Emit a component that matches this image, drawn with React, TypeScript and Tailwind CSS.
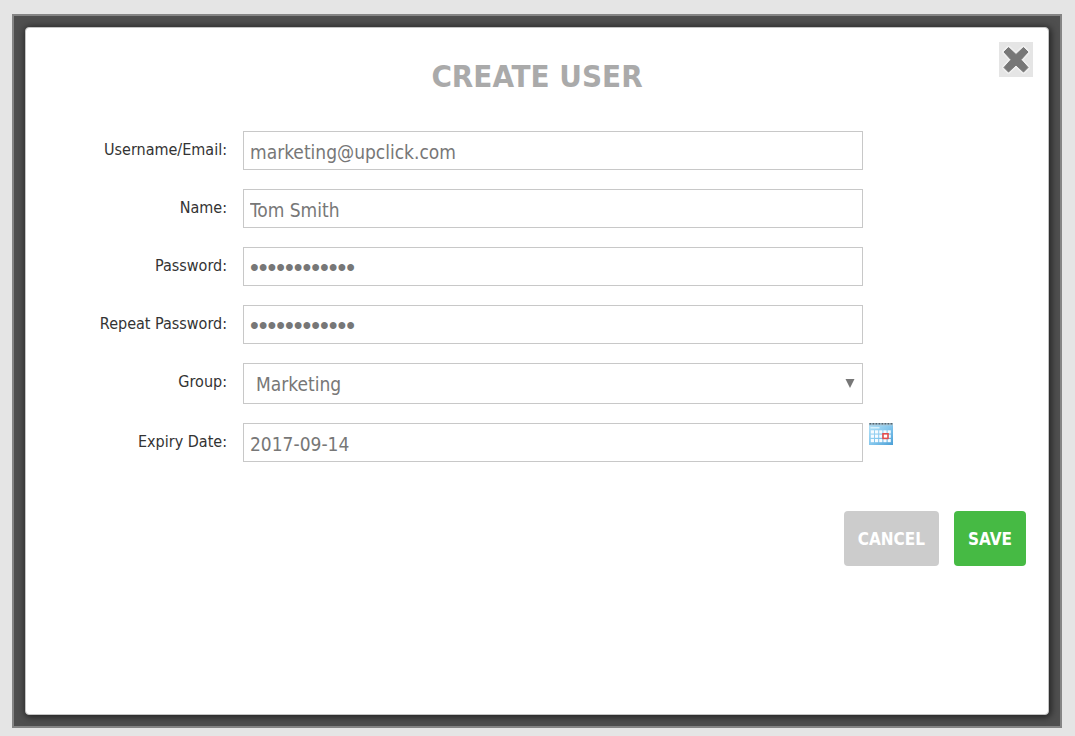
import { useState } from "react";
import type { ReactNode } from "react";

const boxClass =
  "h-[39px] w-full min-w-0 rounded-none border border-[#c8c8c8] bg-white px-1.5 text-[#777777] outline-none focus:border-[#888888]";
const fieldClass = `${boxClass} pt-0.5 text-[19px]`;
const passwordClass = `${boxClass} pt-0.5 text-[25px] font-['Liberation_Sans',sans-serif]`;

function Row({ id, label, children, after }: { id: string; label: string; children: ReactNode; after?: ReactNode }) {
  return (
    <div className="flex items-start">
      <label htmlFor={id} className="mr-4 w-[201px] shrink-0 pt-2 text-right text-[16px] leading-[22px] text-[#333333]">
        {label}
      </label>
      <div className="min-w-0 max-w-[620px] flex-1">{children}</div>
      <div className="ml-1.5 w-6 shrink-0">{after}</div>
    </div>
  );
}

function CloseIcon() {
  const cross =
    "M9.500 5.500 17 12.500 24.500 5.500 29 10 22 17.700 29 25.500 24.500 30 17 23 9.500 30 5 25.500 12 17.700 5 10Z";
  return (
    <svg viewBox="0 0 34 35" className="h-[35px] w-[34px]" aria-hidden="true">
      <path d={cross} fill="#efefef" stroke="#efefef" strokeWidth="4" strokeLinejoin="round" />
      <path d={cross} fill="#777777" stroke="#777777" strokeWidth="1" strokeLinejoin="round" />
    </svg>
  );
}

function CalendarIcon() {
  const columns = [1.8, 6, 10.2, 14.4, 18.6];
  const rows = [7.3, 11.6, 16];
  return (
    <svg viewBox="0 0 24 22" className="h-[22px] w-6" aria-hidden="true">
      <defs>
        <linearGradient id="sheet" x1="0" y1="0" x2="1" y2="1">
          <stop offset="0" stopColor="#b4e2f8" />
          <stop offset="0.5" stopColor="#86c8ee" />
          <stop offset="1" stopColor="#4a9fd6" />
        </linearGradient>
      </defs>
      <rect y="1" width="24" height="21" fill="url(#sheet)" />
      <rect width="24" height="2.500" fill="#a9c8da" />
      {[0.5, 3.5, 6.5, 9.5, 12.5, 15.5, 18.5, 21.5].map((x) => (
        <rect key={x} x={x} width="1.800" height="1.500" fill="#56646d" />
      ))}
      <rect x="1.500" y="4" width="9" height="1.500" fill="#d9f1fc" />
      {rows.map((y) => columns.map((x) => <rect key={`${x}-${y}`} x={x} y={y} width="3.200" height="3.200" fill="#f5fbff" />))}
      <rect x="14" y="10.800" width="5" height="4.600" fill="#fff" stroke="#e34c4c" strokeWidth="1.600" />
    </svg>
  );
}

export default function App() {
  const [username, setUsername] = useState("marketing@upclick.com");
  const [name, setName] = useState("Tom Smith");
  const [password, setPassword] = useState("tomsmith2017");
  const [repeat, setRepeat] = useState("tomsmith2017");
  const [group, setGroup] = useState("Marketing");
  const [expiry, setExpiry] = useState("2017-09-14");

  return (
    <div className="flex min-h-screen flex-col bg-[#e5e5e5] pt-3.5 pr-[13px] pb-2 pl-3 font-['DejaVu_Sans_Condensed','DejaVu_Sans',sans-serif]">
      <div className="flex flex-1 flex-col border-2 border-[#858585] bg-[#4f4f4f] p-[11px]">
        <main
          role="dialog"
          aria-labelledby="title"
          className="relative flex-1 rounded-[4px] border border-[#c4c4c4] bg-white shadow-[1px_1px_7px_1px_rgba(0,0,0,0.6)]"
        >
          <button type="button" aria-label="Close" className="absolute top-3.5 right-[15px] bg-[#e5e5e5]">
            <CloseIcon />
          </button>
          <h1 id="title" className="pt-7 text-center text-[31px] leading-10 font-bold text-[#aaaaaa]">
            CREATE USER
          </h1>
          <form onSubmit={(e) => e.preventDefault()}>
            <div className="flex flex-col gap-[19px] pt-[35px]">
              <Row id="username" label="Username/Email:">
                <input id="username" className={fieldClass} value={username} onChange={(e) => setUsername(e.target.value)} />
              </Row>
              <Row id="name" label="Name:">
                <input id="name" className={fieldClass} value={name} onChange={(e) => setName(e.target.value)} />
              </Row>
              <Row id="password" label="Password:">
                <input id="password" type="password" className={passwordClass} value={password} onChange={(e) => setPassword(e.target.value)} />
              </Row>
              <Row id="repeat" label="Repeat Password:">
                <input id="repeat" type="password" className={passwordClass} value={repeat} onChange={(e) => setRepeat(e.target.value)} />
              </Row>
              <Row id="group" label="Group:">
                <div className="relative">
                  <select
                    id="group"
                    className="h-[41px] w-full appearance-none border border-[#c8c8c8] bg-white pt-0.5 pl-3 text-[19px] text-[#777777] outline-none"
                    value={group}
                    onChange={(e) => setGroup(e.target.value)}
                  >
                    <option>Marketing</option>
                  </select>
                  <svg viewBox="0 0 10 9" className="pointer-events-none absolute top-4 right-2 h-[9px] w-2.5" aria-hidden="true">
                    <path d="M0.500 0H9.500L5 9Z" fill="#777777" />
                  </svg>
                </div>
              </Row>
              <Row
                id="expiry"
                label="Expiry Date:"
                after={
                  <button type="button" aria-label="Choose date" className="block">
                    <CalendarIcon />
                  </button>
                }
              >
                <input id="expiry" className={fieldClass} value={expiry} onChange={(e) => setExpiry(e.target.value)} />
              </Row>
            </div>
            <div className="flex justify-end gap-[15px] pt-[49px] pr-[22px] pb-8 text-[17px] font-bold text-white">
              <button type="button" className="h-[55px] rounded-[4px] bg-[#cccccc] px-3.5 pt-0.5">
                CANCEL
              </button>
              <button type="submit" className="h-[55px] rounded-[4px] bg-[#46ba44] px-3.5 pt-0.5">
                SAVE
              </button>
            </div>
          </form>
        </main>
      </div>
    </div>
  );
}
